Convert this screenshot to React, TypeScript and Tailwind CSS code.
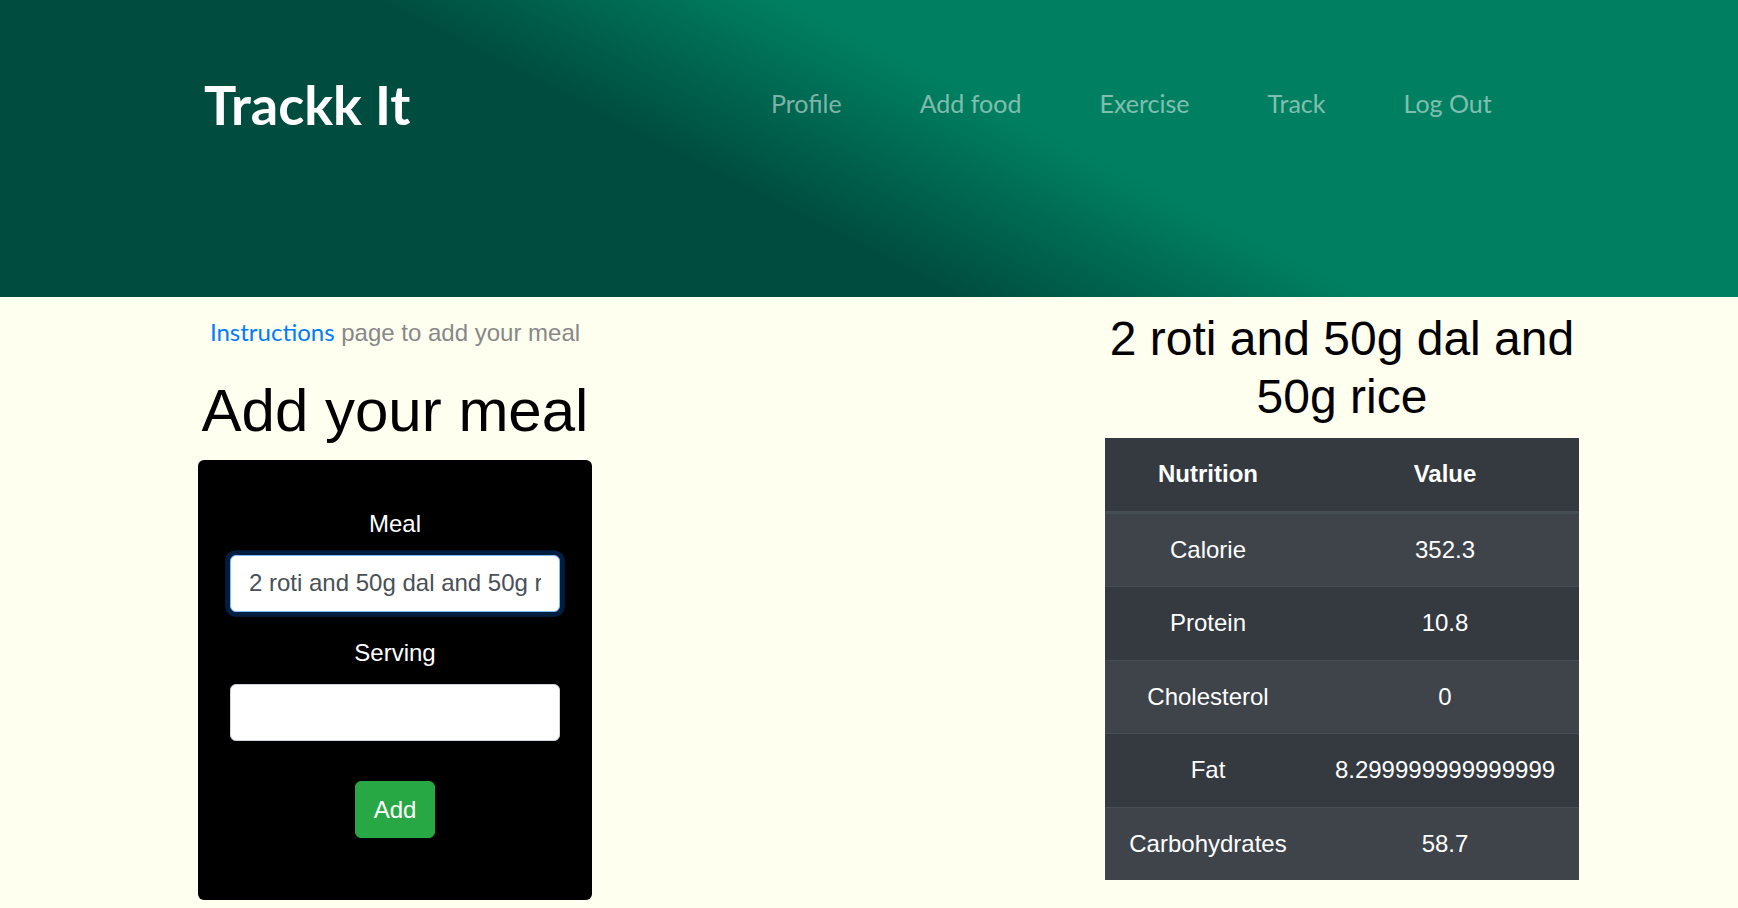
import React from 'react';

const navLinks = ['Profile', 'Add food', 'Exercise', 'Track', 'Log Out'];

const nutrition = [
  { name: 'Calorie', value: '352.3' },
  { name: 'Protein', value: '10.8' },
  { name: 'Cholesterol', value: '0' },
  { name: 'Fat', value: '8.299999999999999' },
  { name: 'Carbohydrates', value: '58.7' },
];

export default function App() {
  return (
    <div className="min-h-screen bg-[#fffff0] font-['Liberation_Sans',Arial,sans-serif]">
      {/* header */}
      <header className="h-[297px] bg-[linear-gradient(27deg,#004c3f_41%,#008060_59%)]">
        <div className="flex h-[210px] items-center pl-[204px]">
          <div className="w-[567px] font-['Lato',sans-serif] text-[54px] font-bold leading-none text-white">
            Trackk It
          </div>
          <nav className="-mt-[4px] flex gap-[78px] font-['Lato',sans-serif] text-[25px] leading-[36px] text-white/50">
            {navLinks.map((link) => (
              <a key={link} href="#" className="block">
                {link}
              </a>
            ))}
          </nav>
        </div>
      </header>

      <main className="flex pl-[198px]">
        {/* add meal form */}
        <div className="flex w-[394px] flex-col items-center pt-[17px] text-center">
          <p className="text-[24px] leading-[36px] text-[#888888]">
            <a href="#" className="font-['Lato',sans-serif] text-[#007bff]">
              Instructions
            </a>{' '}
            page to add your meal
          </p>
          <h1 className="mt-[24px] text-[60px] leading-[72px] text-black">Add your meal</h1>
          <div className="mt-[13px] flex h-[440px] w-[394px] flex-col items-center rounded-[6px] bg-black pt-[46px]">
            <label className="text-[24px] leading-[36px] text-white">Meal</label>
            <input
              readOnly
              value="2 roti and 50g dal and 50g rice"
              className="mt-[13px] h-[57px] w-[330px] rounded-[6px] border-[1.5px] border-[#80bdff] bg-white px-[18px] pb-[2px] text-[24px] text-[#495057] shadow-[0_0_0_4.8px_rgba(0,123,255,0.25)] outline-none"
            />
            <label className="mt-[23px] text-[24px] leading-[36px] text-white">Serving</label>
            <input
              readOnly
              className="mt-[13px] h-[57px] w-[330px] rounded-[6px] border-[1.5px] border-[#ced4da] bg-white px-[18px] text-[24px] text-[#495057] outline-none"
            />
            <button className="mt-[40px] h-[57px] rounded-[6px] border-[1.5px] border-[#28a745] bg-[#28a745] px-[18px] text-[24px] text-white">
              Add
            </button>
          </div>
        </div>

        {/* result table */}
        <div className="ml-[513px] w-[474px] pt-[13px]">
          <h2 className="mb-[13px] text-center text-[48px] leading-[57.6px] text-black">
            2 roti and 50g dal and 50g rice
          </h2>
          <table className="w-full border-collapse text-center text-[24px] leading-[36px] text-white">
            <thead>
              <tr className="bg-[#343a40]">
                <th className="w-[206px] border-b-[3px] border-[#454d55] px-[18px] py-[18.25px] font-bold">Nutrition</th>
                <th className="border-b-[3px] border-[#454d55] px-[18px] py-[18.25px] font-bold">Value</th>
              </tr>
            </thead>
            <tbody>
              {nutrition.map((row, i) => (
                <tr key={row.name} className={i % 2 === 0 ? 'bg-[#3e444a]' : 'bg-[#343a40]'}>
                  <td className="border-t-[1.5px] border-[#454d55] px-[18px] py-[18.25px]">{row.name}</td>
                  <td className="border-t-[1.5px] border-[#454d55] px-[18px] py-[18.25px]">{row.value}</td>
                </tr>
              ))}
            </tbody>
          </table>
        </div>
      </main>
    </div>
  );
}
